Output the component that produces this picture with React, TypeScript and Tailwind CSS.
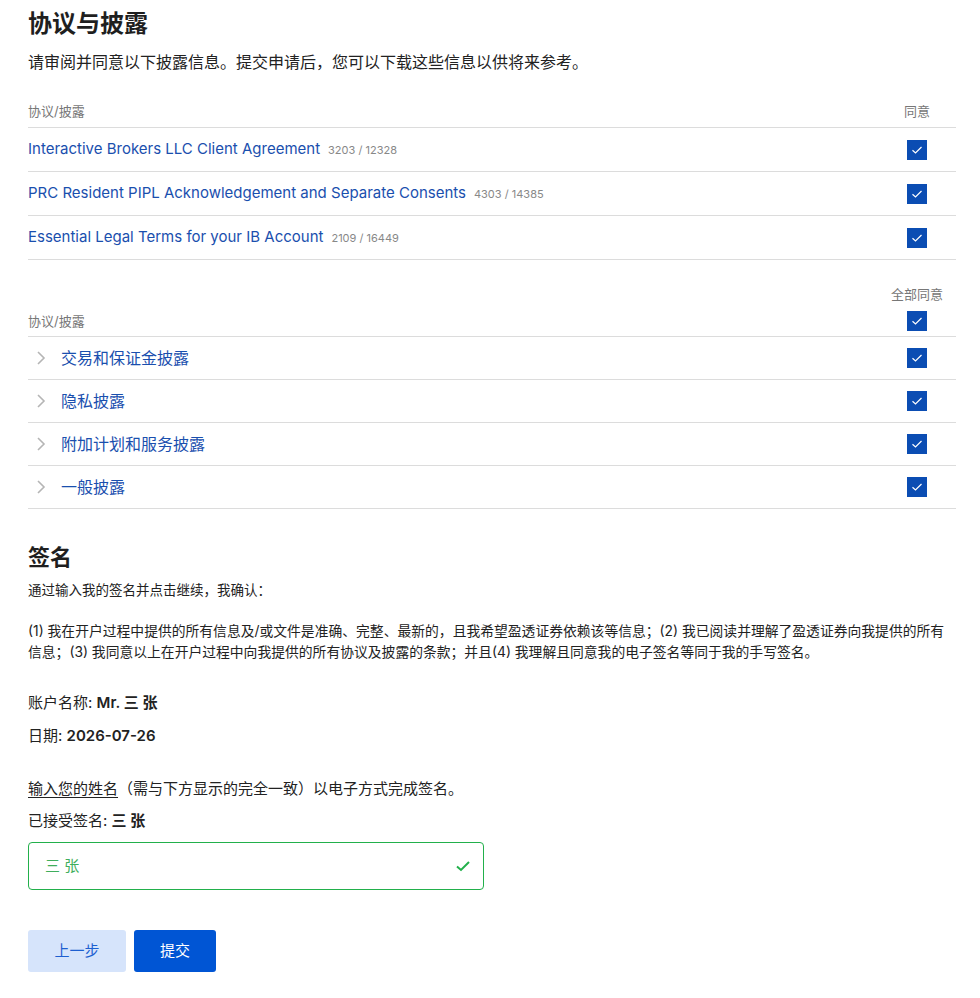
import React from "react";

const font = { fontFamily: 'Inter, "Noto Sans CJK SC", sans-serif' };

function Check() {
  return (
    <span className="flex h-5 w-5 items-center justify-center bg-[#0b4db3]">
      <svg width="12" height="10" viewBox="0 0 12 10" fill="none">
        <path d="M1.5 5.2 L4.5 8 L10.5 2" stroke="white" strokeWidth="1.2" />
      </svg>
    </span>
  );
}

function Chevron() {
  return (
    <svg width="10" height="16" viewBox="0 0 10 16" fill="none">
      <path d="M2 2 L8 8 L2 14" stroke="#b5b5b5" strokeWidth="1.6" />
    </svg>
  );
}

const agreements = [
  ["Interactive Brokers LLC Client Agreement", "3203 / 12328"],
  ["PRC Resident PIPL Acknowledgement and Separate Consents", "4303 / 14385"],
  ["Essential Legal Terms for your IB Account", "2109 / 16449"],
];

const disclosures = ["交易和保证金披露", "隐私披露", "附加计划和服务披露", "一般披露"];

export default function App() {
  return (
    <div className="min-h-[998px] bg-white pl-[28px] pr-[24px] pt-[8px] text-[#222]" style={font}>
      <h1 className="text-[24px] font-bold leading-[32px] text-[#1f1f1f]">协议与披露</h1>
      <p className="mt-[13px] text-[16px] leading-[18px] text-[#222]">
        请审阅并同意以下披露信息。提交申请后，您可以下载这些信息以供将来参考。
      </p>

      <div className="mt-[32px]">
        <div className="flex items-end border-b border-[#dcdcdc] pb-[8px]">
          <div className="flex-1 text-[13px] leading-[16px] text-[#777]">协议/披露</div>
          <div className="w-[78px] text-center text-[13px] leading-[16px] text-[#777]">同意</div>
        </div>
        {agreements.map(([t, n]) => (
          <div key={t} className="flex h-[44px] items-center border-b border-[#dcdcdc]">
            <div className="flex flex-1 items-baseline">
              <span className="text-[15px] text-[#1a4fae]">{t}</span>
              <span className="ml-[8px] text-[11px] text-[#888]">{n}</span>
            </div>
            <div className="flex w-[78px] justify-center">
              <Check />
            </div>
          </div>
        ))}
      </div>

      <div className="mt-[26px]">
        <div className="flex border-b border-[#dcdcdc] pb-[5px]">
          <div className="flex flex-1 items-end pb-[2px] text-[13px] leading-[16px] text-[#777]">协议/披露</div>
          <div className="flex w-[78px] flex-col items-center">
            <div className="text-[13px] leading-[16px] text-[#777]">全部同意</div>
            <div className="mt-[9px]">
              <Check />
            </div>
          </div>
        </div>
        {disclosures.map((t) => (
          <div key={t} className="flex h-[43px] items-center border-b border-[#dcdcdc]">
            <div className="flex flex-1 items-center">
              <span className="ml-[8px] flex w-[25px] items-center">
                <Chevron />
              </span>
              <span className="text-[16px] text-[#1a4fae]">{t}</span>
            </div>
            <div className="flex w-[78px] justify-center">
              <Check />
            </div>
          </div>
        ))}
      </div>

      <h2 className="mt-[33px] text-[22px] font-bold leading-[30px] text-[#1f1f1f]">签名</h2>
      <p className="mt-[8px] text-[13.5px] leading-[20px]">通过输入我的签名并点击继续，我确认：</p>
      <p className="mt-[21px] text-[13.8px] leading-[21px]">
        (1) 我在开户过程中提供的所有信息及/或文件是准确、完整、最新的，且我希望盈透证券依赖该等信息；(2) 我已阅读并理解了盈透证券向我提供的所有信息；(3) 我同意以上在开户过程中向我提供的所有协议及披露的条款；并且(4) 我理解且同意我的电子签名等同于我的手写签名。
      </p>
      <p className="mt-[30px] text-[15px] leading-[20px]">
        账户名称: <span className="font-semibold">Mr. 三 张</span>
      </p>
      <p className="mt-[13px] text-[15px] leading-[20px]">
        日期: <span className="font-semibold">2026-07-26</span>
      </p>
      <p className="mt-[33px] text-[15px] leading-[20px]">
        <span className="underline underline-offset-[3px]">输入您的姓名</span>（需与下方显示的完全一致）以电子方式完成签名。
      </p>
      <p className="mt-[12px] text-[15px] leading-[20px]">
        已接受签名: <span className="font-semibold">三 张</span>
      </p>
      <div className="mt-[11px] flex h-[48px] w-[456px] items-center justify-between rounded-[4px] border border-[#22b04b] pl-[16px] pr-[12px]">
        <span className="text-[15px] text-[#3fae5c]">三 张</span>
        <svg width="16" height="14" viewBox="0 0 16 14" fill="none">
          <path d="M2 7.5 L6 11 L14 3" stroke="#22b04b" strokeWidth="2" />
        </svg>
      </div>
      <div className="mt-[40px] flex gap-[8px]">
        <button className="h-[42px] w-[98px] rounded-[3px] bg-[#d6e4fb] text-[15px] text-[#1d5fd0]">上一步</button>
        <button className="h-[42px] w-[82px] rounded-[3px] bg-[#0055d4] text-[15px] text-white">提交</button>
      </div>
    </div>
  );
}
